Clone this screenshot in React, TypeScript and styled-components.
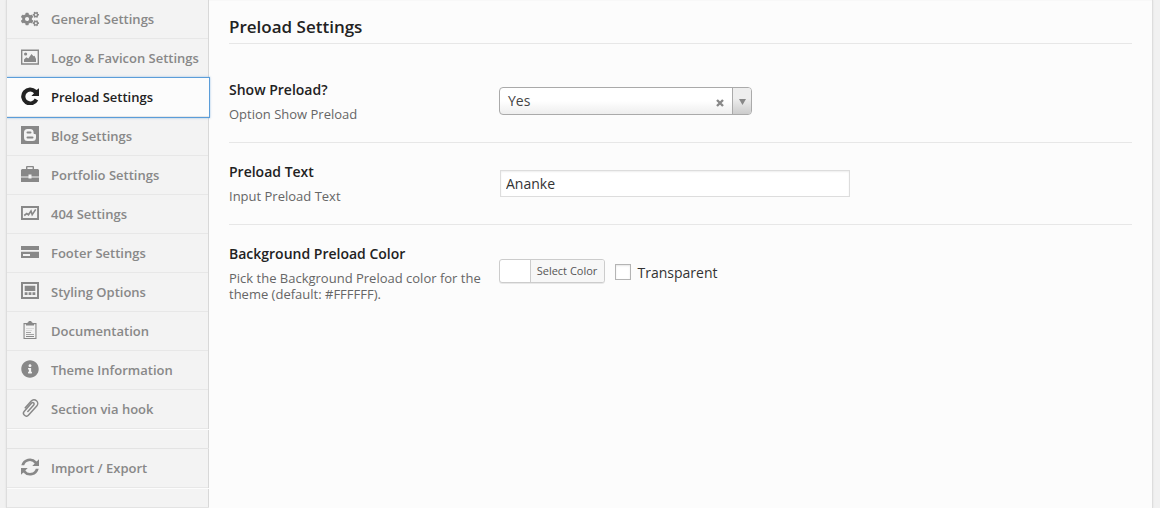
import React from "react";
import styled, { createGlobalStyle } from "styled-components";
import { FaCogs, FaInfoCircle } from "react-icons/fa";

const GlobalStyle = createGlobalStyle`
  * { box-sizing: border-box; }
  body {
    margin: 0;
    background: #f1f1f1;
    font-family: "Open Sans", sans-serif;
    color: #333;
    overflow: hidden;
  }
`;

const Panel = styled.div`
  display: flex;
  width: 1147px;
  height: 508px;
  margin-left: 6px;
  border: solid #ddd;
  border-width: 0 1px;
  background: #fcfcfc;
  box-shadow: 0 0 2px rgba(0, 0, 0, 0.08);
`;

const Sidebar = styled.ul`
  width: 202px;
  flex: none;
  margin: 0;
  padding: 0;
  list-style: none;
  background: #f3f3f3;
  border-right: 1px solid #d8d8d8;
`;

const MenuItem = styled.li<{ $active?: boolean }>`
  display: flex;
  align-items: center;
  height: 39px;
  padding-left: 14px;
  border-bottom: 1px solid #e7e7e7;
  font-size: 13px;
  font-weight: 600;
  white-space: nowrap;
  color: ${(p) => (p.$active ? "#222" : "#888")};
  ${(p) =>
    p.$active &&
    `
    position: relative;
    width: 202px;
    background: #fcfcfc;
    box-shadow: 0 0 0 1px #5b9dd9, 0 0 2px 1px rgba(91, 157, 217, 0.6);
    clip-path: inset(-4px -4px -4px 0);
  `}

  svg {
    flex: none;
    width: 18px;
    height: 18px;
    margin: -2px 12px 0 0;
  }
`;

const GearsIcon = styled(FaCogs)`
  && {
    padding-top: 2px;
  }
`;

const MenuDivider = styled.li`
  width: 202px;
  height: 20px;
  border-top: 1px solid #fcfcfc;
  border-bottom: 1px solid #e3e3e3;
`;

const Main = styled.main`
  flex: 1;
  padding: 16px 20px 0;
  border-top: 1px solid #f8f8f8;
`;

const Heading = styled.h2`
  height: 27px;
  margin: 0 0 17px;
  border-bottom: 1px solid #e7e7e7;
  font-size: 17px;
  font-weight: 600;
  line-height: 20px;
  color: #222;
`;

const Field = styled.section`
  display: flex;
  height: 82px;
  padding-top: 20px;
  border-bottom: 1px solid #e7e7e7;

  &:last-child {
    border-bottom: 0;
  }
`;

const FieldInfo = styled.div`
  flex: none;
  width: 270px;
`;

const FieldTitle = styled.div`
  font-size: 14px;
  font-weight: 600;
  line-height: 18px;
  color: #222;
`;

const FieldHint = styled.p`
  width: 262px;
  margin: 7px 0 0;
  font-size: 13px;
  line-height: 16px;
  color: #666;
`;

const Select = styled.div`
  display: flex;
  align-items: center;
  width: 253px;
  height: 28px;
  margin-top: 6px;
  border: 1px solid #aaa;
  border-radius: 4px;
  overflow: hidden;
  background: linear-gradient(#fff 50%, #eee);
  font-size: 14px;
  color: #444;
`;

const SelectValue = styled.span`
  flex: 1;
  padding: 0 0 2px 8px;
`;

const ClearIcon = styled.svg`
  width: 8px;
  height: 8px;
  margin: 4px 8px 0 0;
`;

const SelectArrow = styled.span`
  display: flex;
  align-items: center;
  justify-content: center;
  width: 19px;
  height: 26px;
  padding-top: 2px;
  border-left: 1px solid #aaa;
  background: linear-gradient(#eee 40%, #ccc);
`;

const TextInput = styled.input`
  width: 350px;
  height: 27px;
  margin: 7px 0 0 1px;
  padding: 0 5px;
  border: 1px solid #ddd;
  box-shadow: inset 0 1px 2px rgba(0, 0, 0, 0.07);
  background: #fff;
  font: 14px "Open Sans", sans-serif;
  color: #333;
`;

const ColorRow = styled.div`
  display: flex;
  align-items: flex-start;
  padding-top: 14px;
`;

const ColorButton = styled.button`
  width: 106px;
  height: 24px;
  padding: 0 0 0 30px;
  display: flex;
  border: 1px solid #ccc;
  border-radius: 3px;
  background: #fff;
  box-shadow: 0 1px 0 rgba(0, 0, 0, 0.08);
  overflow: hidden;
`;

const ColorLabel = styled.span`
  flex: 1;
  height: 22px;
  padding-right: 1px;
  border-left: 1px solid #ccc;
  background: #f7f7f7;
  font: 11px/22px "Open Sans", sans-serif;
  color: #555;
  text-align: center;
  white-space: nowrap;
`;

const CheckLabel = styled.label`
  display: flex;
  align-items: center;
  gap: 6.5px;
  height: 16px;
  margin: 5px 0 0 10px;
  font-size: 14px;
  color: #333;
`;

const CheckBox = styled.input`
  appearance: none;
  width: 16px;
  height: 16px;
  margin: 0;
  border: 1px solid #b4b4b4;
  background: #fff;
  box-shadow: inset 0 1px 2px rgba(0, 0, 0, 0.1);
`;

const Glyph = ({ children }: { children: React.ReactNode }) => (
  <svg viewBox="0 0 18 18" fill="currentColor">{children}</svg>
);

const PictureIcon = () => (
  <Glyph>
    <path fillRule="evenodd" d="M0 1.500h18v15.300H0zM1.400 3v12.300h15.200V3z" />
    <circle cx="4.600" cy="6" r="1.600" />
    <path d="M3 14v-2.500l2.300-2.300 2 1.300L10.500 6l2 2.300 1-.6L15 11v3z" />
  </Glyph>
);

const RepeatIcon = () => (
  <Glyph>
    <path d="M18 1.200V9h-7.600l2.600-2.700A4.900 4.900 0 1 0 13.700 11.600l3.500 1.900A9 9 0 1 1 15.600 3.100z" />
  </Glyph>
);

const BloggerIcon = () => (
  <Glyph>
    <path
      fillRule="evenodd"
      d="M0 0h18v18H0zM6.500 3A3.500 3.500 0 0 0 3 6.500v5A3.500 3.500 0 0 0 6.500 15h5a3.500 3.500 0 0 0 3.500-3.500V9.300c0-.9-.6-1.300-1.500-1.300-.7 0-.9-.3-.9-1A3.800 3.800 0 0 0 9 3zM6.500 5.600h3a1 1 0 0 1 0 2h-3a1 1 0 0 1 0-2zM6.500 10.400h5a1 1 0 0 1 0 2h-5a1 1 0 0 1 0-2z"
    />
  </Glyph>
);

const BriefcaseIcon = () => (
  <Glyph>
    <path d="M5 4V1.500L6 1h6l1 .5V4h4l1 1v6.500h-7.500V9.500h-3v2H0V5l1-1zM6.400 4h5.200V2.300H6.400zM0 12.600h7.500v.9h3v-.9H18V17H0z" />
  </Glyph>
);

const GraphIcon = () => (
  <Glyph>
    <path fillRule="evenodd" d="M0 2h18v14H0zM1.900 3.900v10.200h14.200V3.900z" />
    <path
      d="M3.200 11.500l2.600-2 1.700 1.300L10 7l1.200 3.600L14.700 5.400"
      fill="none"
      stroke="currentColor"
      strokeWidth="1.600"
    />
  </Glyph>
);

const CardIcon = () => (
  <Glyph>
    <path fillRule="evenodd" d="M0 3h18v4H0zM0 8.800h18V15H0zM2 11v2h7v-2z" />
  </Glyph>
);

const WebsiteIcon = () => (
  <Glyph>
    <path fillRule="evenodd" d="M0 0h18v17H0zM2 2v13h14V2z" />
    <path d="M3.700 3.700h10.600V9H3.700zM3.700 10.300h2.800V13H3.700zM7.600 10.300h2.800V13H7.600zM11.500 10.300h2.800V13h-2.800z" />
  </Glyph>
);

const ClipboardIcon = () => (
  <Glyph>
    <path
      fillRule="evenodd"
      d="M2.500 2H6l1.500-1a1.500 1.500 0 0 1 3 0L12 2h3.500v16h-13zM3.600 3.200v13.700h10.800V3.200H13V4.500H5V3.200z"
    />
    <path d="M5 7h8v.6H5zM5 9.200h6v.5H5z" opacity=".45" />
    <path d="M5 11h5v.8H5zM5 13h8v.8H5zM5 15h8v.9H5z" />
  </Glyph>
);

const ClipIcon = () => (
  <Glyph>
    <path
      transform="translate(9 9) rotate(42)"
      d="M-3.700 3V-6a3.700 3.700 0 0 1 7.400 0V6.200a2.900 2.900 0 0 1-5.800 0V-4.800a1.400 1.400 0 0 1 2.800 0V4"
      fill="none"
      stroke="currentColor"
      strokeWidth="1.500"
      strokeLinecap="round"
    />
  </Glyph>
);

const RefreshIcon = () => (
  <Glyph>
    <path d="M18 1.300V8h-6.700l2.400-2.400A5.900 5.900 0 0 0 3.200 7.300H.3A8.800 8.800 0 0 1 15.600 3.600z" />
    <path d="M0 16.700V10h6.700l-2.400 2.400a5.900 5.900 0 0 0 10.500-1.700h2.900A8.800 8.800 0 0 1 2.400 14.400z" />
  </Glyph>
);

const menu = [
  { label: "General Settings", Icon: GearsIcon },
  { label: "Logo & Favicon Settings", Icon: PictureIcon },
  { label: "Preload Settings", Icon: RepeatIcon, active: true },
  { label: "Blog Settings", Icon: BloggerIcon },
  { label: "Portfolio Settings", Icon: BriefcaseIcon },
  { label: "404 Settings", Icon: GraphIcon },
  { label: "Footer Settings", Icon: CardIcon },
  { label: "Styling Options", Icon: WebsiteIcon },
  { label: "Documentation", Icon: ClipboardIcon },
  { label: "Theme Information", Icon: FaInfoCircle },
  { label: "Section via hook", Icon: ClipIcon },
];

export default function App() {
  return (
    <>
      <GlobalStyle />
      <Panel>
        <Sidebar>
          {menu.map(({ label, Icon, active }) => (
            <MenuItem key={label} $active={active}>
              <Icon />
              {label}
            </MenuItem>
          ))}
          <MenuDivider />
          <MenuItem>
            <RefreshIcon />
            Import / Export
          </MenuItem>
          <MenuDivider />
        </Sidebar>
        <Main>
          <Heading>Preload Settings</Heading>
          <Field>
            <FieldInfo>
              <FieldTitle>Show Preload?</FieldTitle>
              <FieldHint>Option Show Preload</FieldHint>
            </FieldInfo>
            <Select>
              <SelectValue>Yes</SelectValue>
              <ClearIcon viewBox="0 0 8 8">
                <path d="M1 1l6 6M7 1L1 7" stroke="#888" strokeWidth="2.400" />
              </ClearIcon>
              <SelectArrow>
                <svg width="7" height="6" viewBox="0 0 7 6" fill="#888">
                  <path d="M0 0h7L3.500 6z" />
                </svg>
              </SelectArrow>
            </Select>
          </Field>
          <Field>
            <FieldInfo>
              <FieldTitle>Preload Text</FieldTitle>
              <FieldHint>Input Preload Text</FieldHint>
            </FieldInfo>
            <TextInput type="text" defaultValue="Ananke" />
          </Field>
          <Field>
            <FieldInfo>
              <FieldTitle>Background Preload Color</FieldTitle>
              <FieldHint>Pick the Background Preload color for the theme (default: #FFFFFF).</FieldHint>
            </FieldInfo>
            <ColorRow>
              <ColorButton>
                <ColorLabel>Select Color</ColorLabel>
              </ColorButton>
              <CheckLabel>
                <CheckBox type="checkbox" />
                Transparent
              </CheckLabel>
            </ColorRow>
          </Field>
        </Main>
      </Panel>
    </>
  );
}
